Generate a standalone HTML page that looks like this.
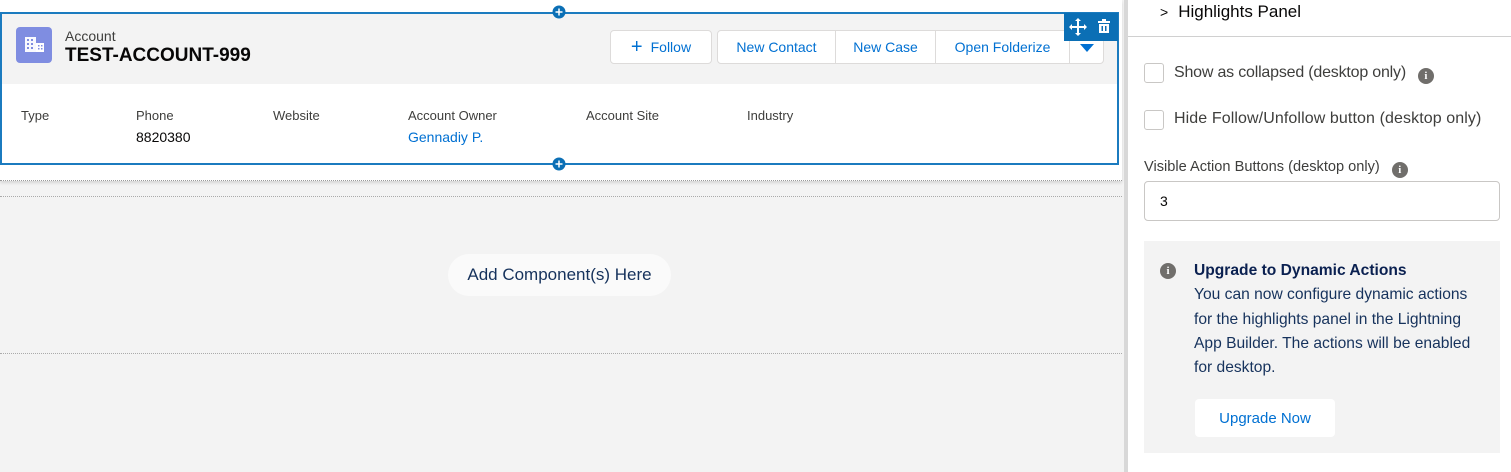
<!DOCTYPE html>
<html><head><style>
*{box-sizing:border-box;margin:0;padding:0}
body{width:1511px;height:472px;overflow:hidden;background:#f3f3f3;font-family:"Liberation Sans",sans-serif;position:relative;color:#3e3e3c}
.abs{position:absolute}
.btn{position:absolute;top:30px;height:34px;background:#fff;border:1px solid #dddbda;color:#0070d2;font-size:14px;display:flex;align-items:center;justify-content:center}
.lbl{position:absolute;top:108px;font-size:13px;color:#3e3e3c}
.val{position:absolute;top:129px;font-size:14px;color:#080707}
.info{display:inline-block;width:16px;height:16px;border-radius:50%;background:#706e6b;color:#fff;font-size:11px;font-weight:bold;text-align:center;line-height:16px;font-family:"Liberation Serif",serif}
.cb{position:absolute;left:1144px;width:20px;height:20px;border:1px solid #c9c7c5;border-radius:3px;background:#fff}
</style></head><body>
<div class="abs" style="left:0;top:0;width:1122px;height:181px;background:#fff;border-bottom:1px dotted #999;box-shadow:0 2px 3px rgba(0,0,0,.12)"></div>
<div class="abs" style="left:0;top:196px;width:1122px;height:158px;border-top:1px dotted #aaa;border-bottom:1px dotted #aaa"></div>
<div class="abs" style="left:448px;top:254px;width:223px;height:42px;border-radius:21px;background:#fafafa;font-size:17px;color:#16325c;display:flex;align-items:center;justify-content:center">Add Component(s) Here</div>
<div class="abs" style="left:0;top:12px;width:1119px;height:153px;border:2px solid #1b7bbf;background:#fff">
 <div style="height:70px;background:#f3f3f3"></div>
</div>
<div class="abs" style="left:16px;top:27px;width:36px;height:36px;border-radius:4px;background:#7f8de1">
 <svg width="36" height="36" viewBox="0 0 36 36"><g fill="#fff"><rect x="9" y="10" width="11" height="15" opacity=".95"/><rect x="20" y="16" width="8" height="9"/></g><g fill="#7f8de1"><rect x="11" y="12" width="2" height="2"/><rect x="15" y="12" width="2" height="2"/><rect x="11" y="16" width="2" height="2"/><rect x="15" y="16" width="2" height="2"/><rect x="11" y="20" width="2" height="2"/><rect x="15" y="20" width="2" height="2"/><rect x="22" y="18" width="1.5" height="1.5"/><rect x="25" y="18" width="1.5" height="1.5"/><rect x="22" y="21" width="1.5" height="1.5"/><rect x="25" y="21" width="1.5" height="1.5"/></g></svg>
</div>
<div class="abs" style="left:65px;top:28px;font-size:14px;color:#3e3e3c">Account</div>
<div class="abs" style="left:65px;top:45px;font-size:19px;font-weight:bold;color:#080707">TEST-ACCOUNT-999</div>
<div class="btn" style="left:610px;width:102px;border-radius:4px"><span style="font-size:20px;margin-right:8px;line-height:1">+</span>Follow</div>
<div class="btn" style="left:717px;width:119px;border-radius:4px 0 0 4px">New Contact</div>
<div class="btn" style="left:835px;width:101px;border-radius:0">New Case</div>
<div class="btn" style="left:935px;width:135px;border-radius:0">Open Folderize</div>
<div class="btn" style="left:1069px;width:35px;border-radius:0 4px 4px 0"><svg width="14" height="10"><path d="M0 2h14L7 10z" fill="#0070d2"/></svg></div>
<div class="abs" style="left:1064px;top:13px;width:54px;height:28px;background:#0b6fb5">
 <svg width="54" height="28"><g stroke="#fff" stroke-width="2" fill="none"><path d="M14 7v14M7 14h14"/></g><g fill="#fff"><path d="M14 5l3 3h-6zM14 23l3-3h-6zM5 14l3-3v6zM23 14l-3-3v6z"/><rect x="34" y="8" width="12" height="2"/><rect x="38" y="6" width="4" height="2"/><path d="M35 11h10v9h-10z"/></g><g fill="#0b6fb5"><rect x="37.5" y="13" width="1.5" height="5"/><rect x="41" y="13" width="1.5" height="5"/></g></svg>
</div>
<svg class="abs" style="left:552px;top:5px" width="14" height="14"><circle cx="7" cy="7" r="6.5" fill="#0b6fb5"/><path d="M7 3.5v7M3.5 7h7" stroke="#fff" stroke-width="1.5"/></svg>
<svg class="abs" style="left:552px;top:157px" width="14" height="14"><circle cx="7" cy="7" r="6.5" fill="#0b6fb5"/><path d="M7 3.5v7M3.5 7h7" stroke="#fff" stroke-width="1.5"/></svg>
<div class="lbl" style="left:21px">Type</div>
<div class="lbl" style="left:136px">Phone</div>
<div class="val" style="left:136px">8820380</div>
<div class="lbl" style="left:273px">Website</div>
<div class="lbl" style="left:408px">Account Owner</div>
<div class="val" style="left:408px;color:#0070d2">Gennadiy P.</div>
<div class="lbl" style="left:586px">Account Site</div>
<div class="lbl" style="left:747px">Industry</div>
<div class="abs" style="left:1124px;top:0;width:4px;height:472px;background:#d8d8d8"></div>
<div class="abs" style="left:1128px;top:0;width:383px;height:472px;background:#fff"></div>
<div class="abs" style="left:1128px;top:36px;width:383px;height:1px;background:#d0d0d0"></div>
<div class="abs" style="left:1160px;top:2px;font-size:17px;color:#080707"><span style="font-size:14px;margin-right:10px">&gt;</span>Highlights Panel</div>
<div class="cb" style="top:63px"></div>
<div class="abs" style="left:1174px;top:64px;font-size:16px;letter-spacing:-0.2px">Show as collapsed (desktop only)<span class="info" style="margin-left:12px;vertical-align:-2px;letter-spacing:0">i</span></div>
<div class="cb" style="top:110px"></div>
<div class="abs" style="left:1174px;top:110px;font-size:16px;letter-spacing:0.1px">Hide Follow/Unfollow button (desktop only)</div>
<div class="abs" style="left:1144px;top:159px;font-size:14.6px">Visible Action Buttons (desktop only)<span class="info" style="margin-left:12px;vertical-align:-2px">i</span></div>
<div class="abs" style="left:1144px;top:181px;width:356px;height:40px;border:1px solid #c9c7c5;border-radius:4px;padding-left:15px;line-height:38px;font-size:14px;color:#080707">3</div>
<div class="abs" style="left:1144px;top:241px;width:356px;height:212px;background:#f3f3f3"></div>
<span class="info abs" style="left:1160px;top:263px">i</span>
<div class="abs" style="left:1194px;top:259px;font-size:15.6px;line-height:24.3px;color:#16325c;width:316px"><b style="color:#0a2050">Upgrade to Dynamic Actions</b><br>You can now configure dynamic actions<br>for the highlights panel in the Lightning<br>App Builder. The actions will be enabled<br>for desktop.</div>
<div class="abs" style="left:1195px;top:399px;width:140px;height:38px;background:#fff;border-radius:4px;color:#0070d2;font-size:15px;display:flex;align-items:center;justify-content:center">Upgrade Now</div>
</body></html>
